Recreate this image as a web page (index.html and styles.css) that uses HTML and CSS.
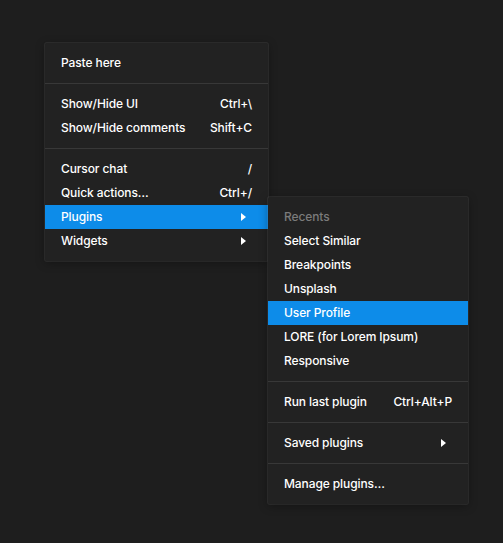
FILE: index.html
```html
<!DOCTYPE html>
<html>
<head>
<meta charset="utf-8">
<link rel="stylesheet" href="styles.css">
</head>
<body>
<div class="stage">
  <div class="menu main">
    <div class="item"><span>Paste here</span></div>
    <div class="sep"></div>
    <div class="item"><span>Show/Hide UI</span><span class="key">Ctrl+\</span></div>
    <div class="item"><span>Show/Hide comments</span><span class="key">Shift+C</span></div>
    <div class="sep"></div>
    <div class="item"><span>Cursor chat</span><span class="key">/</span></div>
    <div class="item"><span>Quick actions…</span><span class="key">Ctrl+/</span></div>
    <div class="item active"><span>Plugins</span><span class="arrow"></span></div>
    <div class="item"><span>Widgets</span><span class="arrow"></span></div>
  </div>
  <div class="menu sub">
    <div class="item label"><span>Recents</span></div>
    <div class="item"><span>Select Similar</span></div>
    <div class="item"><span>Breakpoints</span></div>
    <div class="item"><span>Unsplash</span></div>
    <div class="item active"><span>User Profile</span></div>
    <div class="item"><span>LORE (for Lorem Ipsum)</span></div>
    <div class="item"><span>Responsive</span></div>
    <div class="sep"></div>
    <div class="item"><span>Run last plugin</span><span class="key">Ctrl+Alt+P</span></div>
    <div class="sep"></div>
    <div class="item"><span>Saved plugins</span><span class="arrow"></span></div>
    <div class="sep"></div>
    <div class="item"><span>Manage plugins…</span></div>
  </div>
</div>
</body>
</html>
```
FILE: styles.css
```css
html, body {
  margin: 0;
  height: 100%;
  background: #1e1e1e;
}
body {
  font-family: Inter, "Noto Sans", sans-serif;
  font-size: 12px;
  font-weight: 500;
  letter-spacing: -0.1px;
  color: #ffffff;
}
.stage {
  position: relative;
  padding: 43px 0 0 45px;
}
.menu {
  box-sizing: border-box;
  background: #222222;
  padding: 8px 0;
  border-radius: 2px;
  box-shadow: 0 0 0 1px rgba(255, 255, 255, 0.07), 0 2px 10px rgba(0, 0, 0, 0.35);
}
.main {
  width: 223px;
}
.sub {
  position: absolute;
  left: 268px;
  top: 197px;
  width: 200px;
}
.item {
  box-sizing: border-box;
  height: 24px;
  display: flex;
  align-items: center;
  justify-content: space-between;
  padding: 0 16px 1px;
  white-space: nowrap;
}
.item.active {
  background: #0d8ce9;
}
.item.label {
  color: #7b7b7b;
}
.sep {
  height: 1px;
  background: #383838;
  margin: 8px 0;
}
.arrow {
  width: 0;
  height: 0;
  border-top: 4px solid transparent;
  border-bottom: 4px solid transparent;
  border-left: 5px solid #ffffff;
  margin-right: 6px;
}
```
